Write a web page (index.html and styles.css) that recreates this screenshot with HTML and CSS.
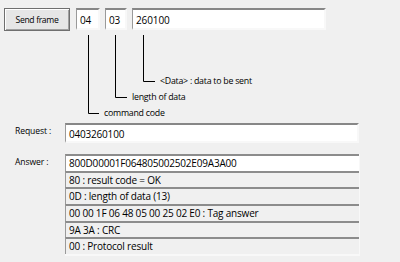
FILE: index.html
```html
<!DOCTYPE html>
<html lang="en">
<head>
  <meta charset="UTF-8" />
  <title>Send frame</title>
  <link rel="stylesheet" href="styles.css">
</head>
<body>
  <div class="top">
    <button class="send-button">Send frame</button>
    <div class="field field-cmd">04</div>
    <div class="field field-len">03</div>
    <div class="field field-data">260100</div>
  </div>

  <div class="diagram">
    <svg class="lines" width="400" height="90" viewBox="0 0 400 90">
      <polyline points="88.5,4 88.5,82.5 99,82.5" />
      <polyline points="115.5,4 115.5,66.5 127,66.5" />
      <polyline points="143.5,4 143.5,50.5 155,50.5" />
    </svg>
    <span class="note note-data">&lt;Data&gt; : data to be sent</span>
    <span class="note note-len">length of data</span>
    <span class="note note-cmd">command code</span>
  </div>

  <div class="row">
    <div class="label">Request :</div>
    <div class="field field-wide">0403260100</div>
  </div>

  <div class="row answer-row">
    <div class="label">Answer :</div>
    <div class="answer">
      <div class="line first">800D00001F064805002502E09A3A00</div>
      <div class="line">80 : result code = OK</div>
      <div class="line">0D : length of data (13)</div>
      <div class="line">00 00 1F 06 48 05 00 25 02 E0 : Tag answer</div>
      <div class="line">9A 3A : CRC</div>
      <div class="line">00 : Protocol result</div>
    </div>
  </div>
</body>
</html>
```

FILE: styles.css
```css
body {
  margin: 0;
  background: #f0f0f0;
  color: #000;
  font-family: "Open Sans", "DejaVu Sans", sans-serif;
  font-size: 10px;
}

.top {
  display: flex;
  align-items: flex-start;
  padding: 8px 0 0 4px;
}

.send-button {
  width: 66px;
  height: 23px;
  margin-right: 6px;
  padding: 0;
  background: #e6e6e6;
  border: 1px solid #6f6f6f;
  box-shadow: inset 1px 1px #fff, inset -1px -1px #a0a0a0;
  font-family: inherit;
  font-size: 8.6px;
  letter-spacing: -0.35px;
  color: #000;
}

.field {
  box-sizing: border-box;
  height: 22px;
  padding: 3px 0 0 3px;
  background: #fff;
  border-top: 2px solid #878787;
  border-left: 1px solid #9a9a9a;
  border-right: 2px solid #f8f8f8;
  border-bottom: 2px solid #f8f8f8;
  line-height: 14px;
  letter-spacing: -0.1px;
}

.field-cmd {
  width: 24px;
  margin-right: 5px;
}

.field-len {
  width: 22px;
  margin-right: 5px;
}

.field-data {
  width: 194px;
}

.diagram {
  position: relative;
  height: 90px;
}

.lines {
  position: absolute;
  top: 0;
  left: 0;
}

.lines polyline {
  fill: none;
  stroke: #000;
  stroke-width: 1;
}

.note {
  position: absolute;
  font-size: 8.8px;
  letter-spacing: -0.25px;
  line-height: 12px;
  white-space: nowrap;
}

.note-data { left: 160px; top: 44px; }
.note-len { left: 132px; top: 60px; }
.note-cmd { left: 104px; top: 76px; }

.row {
  display: flex;
  align-items: flex-start;
  padding-left: 15px;
  margin-top: 2px;
}

.label {
  width: 50px;
  padding-top: 2px;
  font-size: 8.6px;
  letter-spacing: -0.1px;
  line-height: 12px;
}

.field-wide {
  width: 294px;
  height: 20px;
  padding-top: 2px;
  font-size: 10px;
  letter-spacing: -0.2px;
}

.answer-row {
  margin-top: 11px;
}

.answer {
  width: 294px;
  border-right: 1px solid #f8f8f8;
  border-bottom: 2px solid #f8f8f8;
}

.line {
  box-sizing: border-box;
  height: 16.7px;
  padding-left: 3px;
  border-top: 2px solid #8c8c8c;
  border-left: 1px solid #9a9a9a;
  line-height: 14px;
  font-size: 10px;
  letter-spacing: -0.2px;
  white-space: nowrap;
  overflow: hidden;
}

.line.first {
  background: #fff;
}
```
